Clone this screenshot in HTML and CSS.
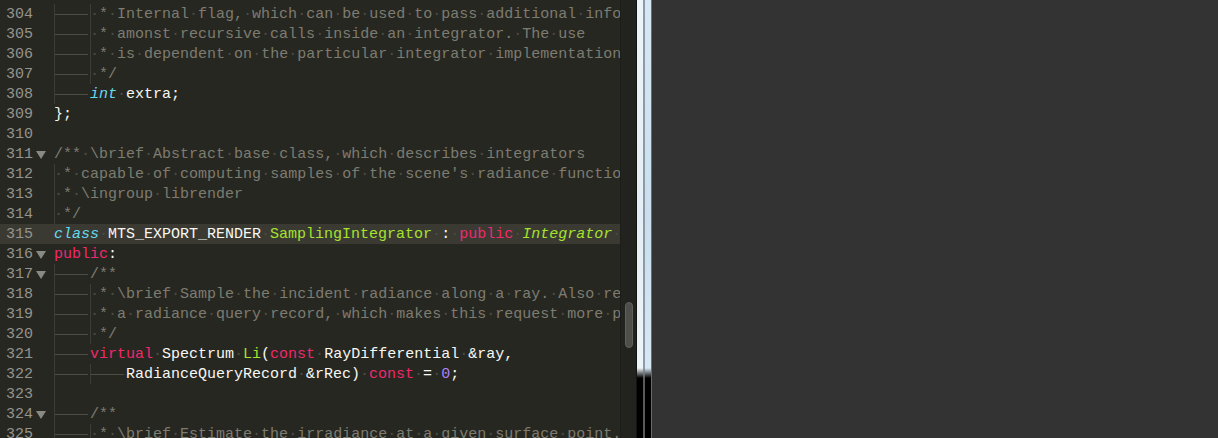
FILE: index.html
```html
<!DOCTYPE html>
<html lang="en">
<head>
  <meta charset="UTF-8">
  <title>SamplingIntegrator - render.h</title>
  <link rel="stylesheet" href="styles.css">
</head>
<body>
  <div class="window">
    <div class="editor">
      <div class="view">
        <div class="line"><span class="num">304</span><span class="fold"></span><span class="code"><span class="t"></span><span class="c"><span class="w g">·</span>*<span class="w">·</span>Internal<span class="w">·</span>flag,<span class="w">·</span>which<span class="w">·</span>can<span class="w">·</span>be<span class="w">·</span>used<span class="w">·</span>to<span class="w">·</span>pass<span class="w">·</span>additional<span class="w">·</span>information</span></span></div>
        <div class="line"><span class="num">305</span><span class="fold"></span><span class="code"><span class="t"></span><span class="c"><span class="w g">·</span>*<span class="w">·</span>amonst<span class="w">·</span>recursive<span class="w">·</span>calls<span class="w">·</span>inside<span class="w">·</span>an<span class="w">·</span>integrator.<span class="w">·</span>The<span class="w">·</span>use</span></span></div>
        <div class="line"><span class="num">306</span><span class="fold"></span><span class="code"><span class="t"></span><span class="c"><span class="w g">·</span>*<span class="w">·</span>is<span class="w">·</span>dependent<span class="w">·</span>on<span class="w">·</span>the<span class="w">·</span>particular<span class="w">·</span>integrator<span class="w">·</span>implementation.</span></span></div>
        <div class="line"><span class="num">307</span><span class="fold"></span><span class="code"><span class="t"></span><span class="c"><span class="w g">·</span>*/</span></span></div>
        <div class="line"><span class="num">308</span><span class="fold"></span><span class="code"><span class="t"></span><span class="ty">int</span><span class="w">·</span>extra;</span></div>
        <div class="line"><span class="num">309</span><span class="fold"></span><span class="code">};</span></div>
        <div class="line"><span class="num">310</span><span class="fold"></span><span class="code"></span></div>
        <div class="line"><span class="num">311</span><span class="fold"><svg width="10" height="8" viewBox="0 0 10 8"><polygon points="0,0 10,0 5,8"/></svg></span><span class="code"><span class="c">/**<span class="w">·</span>\brief<span class="w">·</span>Abstract<span class="w">·</span>base<span class="w">·</span>class,<span class="w">·</span>which<span class="w">·</span>describes<span class="w">·</span>integrators</span></span></div>
        <div class="line"><span class="num">312</span><span class="fold"></span><span class="code"><span class="c"><span class="w g">·</span>*<span class="w">·</span>capable<span class="w">·</span>of<span class="w">·</span>computing<span class="w">·</span>samples<span class="w">·</span>of<span class="w">·</span>the<span class="w">·</span>scene's<span class="w">·</span>radiance<span class="w">·</span>function</span></span></div>
        <div class="line"><span class="num">313</span><span class="fold"></span><span class="code"><span class="c"><span class="w g">·</span>*<span class="w">·</span>\ingroup<span class="w">·</span>librender</span></span></div>
        <div class="line"><span class="num">314</span><span class="fold"></span><span class="code"><span class="c"><span class="w g">·</span>*/</span></span></div>
        <div class="line current"><span class="num">315</span><span class="fold"></span><span class="code"><span class="ty">class</span><span class="w">·</span>MTS_EXPORT_RENDER<span class="w">·</span><span class="f">SamplingIntegrator</span><span class="w">·</span>:<span class="w">·</span><span class="k">public</span><span class="w">·</span><span class="fi">Integrator</span><span class="w">·</span>{</span></div>
        <div class="line"><span class="num">316</span><span class="fold"><svg width="10" height="8" viewBox="0 0 10 8"><polygon points="0,0 10,0 5,8"/></svg></span><span class="code"><span class="k">public</span>:</span></div>
        <div class="line"><span class="num">317</span><span class="fold"><svg width="10" height="8" viewBox="0 0 10 8"><polygon points="0,0 10,0 5,8"/></svg></span><span class="code"><span class="t"></span><span class="c">/**</span></span></div>
        <div class="line"><span class="num">318</span><span class="fold"></span><span class="code"><span class="t"></span><span class="c"><span class="w g">·</span>*<span class="w">·</span>\brief<span class="w">·</span>Sample<span class="w">·</span>the<span class="w">·</span>incident<span class="w">·</span>radiance<span class="w">·</span>along<span class="w">·</span>a<span class="w">·</span>ray.<span class="w">·</span>Also<span class="w">·</span>returns</span></span></div>
        <div class="line"><span class="num">319</span><span class="fold"></span><span class="code"><span class="t"></span><span class="c"><span class="w g">·</span>*<span class="w">·</span>a<span class="w">·</span>radiance<span class="w">·</span>query<span class="w">·</span>record,<span class="w">·</span>which<span class="w">·</span>makes<span class="w">·</span>this<span class="w">·</span>request<span class="w">·</span>more<span class="w">·</span>powerful</span></span></div>
        <div class="line"><span class="num">320</span><span class="fold"></span><span class="code"><span class="t"></span><span class="c"><span class="w g">·</span>*/</span></span></div>
        <div class="line"><span class="num">321</span><span class="fold"></span><span class="code"><span class="t"></span><span class="k">virtual</span><span class="w">·</span>Spectrum<span class="w">·</span><span class="f">Li</span>(<span class="k">const</span><span class="w">·</span>RayDifferential<span class="w">·</span>&amp;ray,</span></div>
        <div class="line"><span class="num">322</span><span class="fold"></span><span class="code"><span class="t"></span><span class="t"></span>RadianceQueryRecord<span class="w">·</span>&amp;rRec)<span class="w">·</span><span class="k">const</span><span class="w">·</span>=<span class="w">·</span><span class="n">0</span>;</span></div>
        <div class="line"><span class="num">323</span><span class="fold"></span><span class="code"><span class="w g"></span></span></div>
        <div class="line"><span class="num">324</span><span class="fold"><svg width="10" height="8" viewBox="0 0 10 8"><polygon points="0,0 10,0 5,8"/></svg></span><span class="code"><span class="t"></span><span class="c">/**</span></span></div>
        <div class="line"><span class="num">325</span><span class="fold"></span><span class="code"><span class="t"></span><span class="c"><span class="w g">·</span>*<span class="w">·</span>\brief<span class="w">·</span>Estimate<span class="w">·</span>the<span class="w">·</span>irradiance<span class="w">·</span>at<span class="w">·</span>a<span class="w">·</span>given<span class="w">·</span>surface<span class="w">·</span>point.</span></span></div>
      </div>
      <div class="scrollbar">
        <div class="thumb"></div>
      </div>
    </div>
    <div class="frame">
      <div class="strip light"></div>
      <div class="strip mid"></div>
      <div class="strip blue"></div>
      <div class="strip edge"></div>
    </div>
    <div class="pane"></div>
  </div>
</body>
</html>
```

FILE: styles.css
```css
html, body {
  margin: 0;
  height: 100%;
  background: #333333;
  overflow: hidden;
}

.window {
  display: flex;
  height: 438px;
}

.editor {
  display: flex;
  width: 637px;
  background: #272722;
  border-right: 1px solid #141412;
  box-sizing: border-box;
}

.view {
  width: 620px;
  padding-top: 4px;
  overflow: hidden;
  font-family: "Liberation Mono", monospace;
  font-size: 15px;
  color: #f8f8f2;
}

/* line box is 22px so the baseline sits 1px lower, clipped to 20px rows */
.line {
  display: flex;
  height: 20px;
  line-height: 22px;
  white-space: pre;
  overflow: hidden;
}

.line.current {
  background: #3a3a32;
}

.num {
  width: 27px;
  padding-left: 6px;
  text-align: right;
  color: #94948d;
  flex-shrink: 0;
}

.fold {
  width: 21px;
  height: 20px;
  flex-shrink: 0;
  display: flex;
  align-items: center;
  padding-left: 3px;
  box-sizing: border-box;
}

.fold svg {
  fill: #8a8a84;
  margin-top: 1px;
}

.code {
  flex: 1;
  overflow: hidden;
}

/* whitespace markers */
.t {
  display: inline-block;
  position: relative;
  width: 36px;
  height: 20px;
  vertical-align: top;
  box-shadow: inset 1px 0 #3d3d36;
}

.t::after {
  content: "";
  position: absolute;
  left: 1px;
  right: 2px;
  top: 10px;
  height: 1px;
  background: #4d4d45;
}

.w {
  color: #4c4c44;
}

.g {
  display: inline-block;
  min-width: 9px;
  height: 20px;
  vertical-align: top;
  box-shadow: inset 1px 0 #3d3d36;
}

/* syntax */
.c { color: #7d7c70; }
.k { color: #f0286c; }
.ty { color: #66d9ef; font-style: italic; }
.f { color: #a6e22e; }
.fi { color: #a6e22e; font-style: italic; }
.n { color: #ae81ff; }

.scrollbar {
  width: 16px;
  background: #22221e;
  border-left: 1px solid #1d1d1a;
  box-sizing: border-box;
  padding-top: 302px;
}

.thumb {
  width: 8px;
  height: 46px;
  margin-left: 4px;
  background: #4e4e4b;
  border: 1px solid #60605d;
  border-radius: 4px;
  box-sizing: border-box;
}

.frame {
  display: flex;
  width: 15px;
}

.strip {
  height: 100%;
}

.light {
  width: 6px;
  background: linear-gradient(to bottom, #eef5fa 0, #e4eef6 50%, #eef5fa 368px, #000 378px);
}

.mid {
  width: 2px;
  background: linear-gradient(to bottom, #8d9aa5 368px, #5a5a5a 378px);
}

.blue {
  width: 6px;
  background: linear-gradient(to bottom, #d6e8f3 0, #c9dfee 50%, #d6e8f3 368px, #000 378px);
}

.edge {
  width: 1px;
  background: #5f6e7a;
}

.pane {
  flex: 1;
  background: #333333;
}
```
